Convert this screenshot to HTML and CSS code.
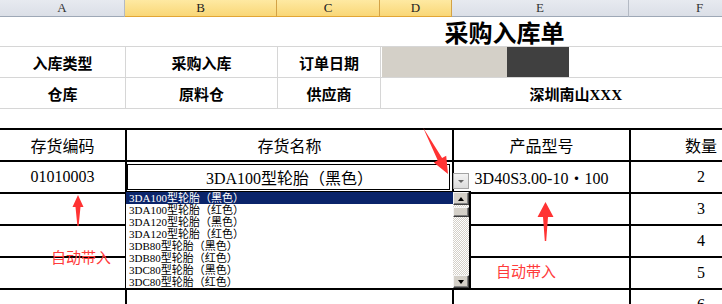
FILE: index.html
```html
<!DOCTYPE html>
<html lang="zh-CN">
<head>
<meta charset="utf-8">
<title>采购入库单</title>
<link rel="stylesheet" href="styles.css">
</head>
<body>
<div class="sheet">
  <div class="colhead">
    <div class="ch">A</div>
    <div class="ch sel">B</div>
    <div class="ch sel">C</div>
    <div class="ch sel">D</div>
    <div class="ch">E</div>
    <div class="ch">F</div>
  </div>

  <div class="row r-title">
    <div class="title">采购入库单</div>
  </div>

  <div class="row r-info">
    <div class="c lbl">入库类型</div>
    <div class="c lbl gl">采购入库</div>
    <div class="c lbl gl">订单日期</div>
    <div class="c gl date"><span class="box light"></span><span class="box dark"></span></div>
    <div class="c"></div>
  </div>

  <div class="row r-info">
    <div class="c lbl">仓库</div>
    <div class="c lbl gl">原料仓</div>
    <div class="c lbl gl">供应商</div>
    <div class="c lbl gl supplier">深圳南山XXX</div>
    <div class="c"></div>
  </div>

  <div class="row r-gap"></div>

  <div class="row t-row">
    <div class="t">存货编码</div>
    <div class="t vl wide">存货名称</div>
    <div class="t vl">产品型号</div>
    <div class="t vl">数量</div>
  </div>
  <div class="row t-row">
    <div class="t">01010003</div>
    <div class="t vl wide active">3DA100型轮胎（黑色）</div>
    <div class="t vl">3D40S3.00-10・100</div>
    <div class="t vl">2</div>
  </div>
  <div class="row t-row">
    <div class="t"></div>
    <div class="t vl wide"></div>
    <div class="t vl"></div>
    <div class="t vl">3</div>
  </div>
  <div class="row t-row">
    <div class="t"></div>
    <div class="t vl wide"></div>
    <div class="t vl"></div>
    <div class="t vl">4</div>
  </div>
  <div class="row t-row">
    <div class="t"></div>
    <div class="t vl wide"></div>
    <div class="t vl"></div>
    <div class="t vl">5</div>
  </div>
  <div class="row t-row">
    <div class="t"></div>
    <div class="t vl wide"></div>
    <div class="t vl"></div>
    <div class="t vl">6</div>
  </div>

  <div class="ddbtn"><span class="tri-down small"></span></div>

  <div class="list">
    <div class="items">
      <div class="item on">3DA100型轮胎（黑色）</div>
      <div class="item">3DA100型轮胎（红色）</div>
      <div class="item">3DA120型轮胎（黑色）</div>
      <div class="item">3DA120型轮胎（红色）</div>
      <div class="item">3DB80型轮胎（黑色）</div>
      <div class="item">3DB80型轮胎（红色）</div>
      <div class="item">3DC80型轮胎（黑色）</div>
      <div class="item">3DC80型轮胎（红色）</div>
    </div>
    <div class="sb">
      <div class="sbtn"><span class="tri-up"></span></div>
      <div class="thumb"></div>
      <div class="track"></div>
      <div class="sbtn"><span class="tri-down"></span></div>
    </div>
  </div>

  <div class="note note-a">自动带入</div>
  <div class="note note-e">自动带入</div>

  <svg class="arrows" width="722" height="304" viewBox="0 0 722 304">
    <polygon points="78,195 83.5,207 80.5,207 78.6,226 77.4,226 75.5,207 72.5,207"/>
    <polygon points="545.5,202 553.5,217 548,217 546.2,241 544.8,241 543,217 537.5,217"/>
    <polygon points="423,127.5 442.1,157.9 446.2,155.8 448,174 433.8,162.4 437.7,160.3"/>
  </svg>
</div>
</body>
</html>
```

FILE: styles.css
```css
html, body {
  margin: 0;
  padding: 0;
  background: #fff;
}

.sheet {
  --cols: 125px 152px 103px 72px 177px 142px;
  position: relative;
  width: 722px;
  height: 304px;
  overflow: hidden;
  background: #fff;
  font-family: "Liberation Serif", "Noto Sans CJK SC", serif;
  color: #000;
}

/* column header */
.colhead {
  display: grid;
  grid-template-columns: var(--cols);
  height: 17px;
}
.ch {
  box-sizing: border-box;
  height: 17px;
  background: linear-gradient(#e7eaf0, #dbdfe7);
  border-bottom: 1px solid #9ea8b6;
  border-right: 1px solid #b4bac4;
  font: 13px/16px "Liberation Serif", serif;
  color: #333;
  text-align: center;
}
.ch.sel {
  background: linear-gradient(#fee9a2, #f9d777);
  border-bottom-color: #e2a635;
  border-right-color: #d3a246;
  color: #222;
}

/* upper area */
.row {
  display: grid;
  grid-template-columns: var(--cols);
  box-sizing: border-box;
}
.r-title {
  height: 30px;
  border-bottom: 1px solid #d6d6d6;
}
.title {
  grid-column: 4 / span 2;
  text-align: center;
  font: bold 24px/29px "Noto Sans CJK SC", sans-serif;
  white-space: nowrap;
}
.r-info {
  height: 31px;
  border-bottom: 1px solid #d6d6d6;
}
.c {
  box-sizing: border-box;
  display: flex;
  align-items: center;
  justify-content: center;
  white-space: nowrap;
}
.gl {
  border-left: 1px solid #d6d6d6;
}
.lbl {
  font-weight: bold;
  font-size: 15px;
  font-family: "Liberation Serif", "Noto Sans CJK SC", serif;
}
.date {
  grid-column: 4 / span 2;
  justify-content: flex-start;
  align-items: stretch;
  padding: 0 0 0 1px;
}
.box {
  display: block;
}
.box.light {
  width: 125px;
  background: #d4d0c8;
}
.box.dark {
  width: 62px;
  background: #404040;
}
.supplier {
  grid-column: 4 / span 2;
  justify-content: flex-end;
  padding-right: 7px;
}
.r-gap {
  height: 19px;
}

/* lower table */
.t-row {
  height: 32px;
  border-top: 2px solid #000;
}
.t {
  box-sizing: border-box;
  display: flex;
  align-items: center;
  justify-content: center;
  font-size: 16px;
  white-space: nowrap;
}
.t.wide {
  grid-column: span 3;
}
.vl {
  border-left: 2px solid #000;
}
.active {
  outline: 1px solid #000;
  outline-offset: -3px;
}

/* dropdown button */
.ddbtn {
  position: absolute;
  left: 453px;
  top: 173px;
  width: 16px;
  height: 16px;
  box-sizing: border-box;
  border: 1px solid #a4a4a4;
  background: linear-gradient(#f3f3f3, #dcdcdc);
  display: flex;
  align-items: center;
  justify-content: center;
}

.tri-down,
.tri-up {
  display: block;
  width: 0;
  height: 0;
  border-left: 3.5px solid transparent;
  border-right: 3.5px solid transparent;
}
.tri-down {
  border-top: 4px solid #000;
}
.tri-up {
  border-bottom: 4px solid #000;
}
.tri-down.small {
  border-left-width: 3px;
  border-right-width: 3px;
  border-top: 3px solid #666;
  margin-top: 1px;
}

/* dropdown list */
.list {
  position: absolute;
  left: 125px;
  top: 191px;
  width: 346px;
  height: 99px;
  box-sizing: border-box;
  border: 1px solid #000;
  border-right-width: 2px;
  border-bottom-width: 2px;
  background: #fff;
  display: flex;
}
.items {
  width: 327px;
  font-size: 11px;
  line-height: 12px;
  font-family: "Liberation Serif", "Noto Sans CJK SC", serif;
}
.item {
  height: 12px;
  padding-left: 3px;
  white-space: nowrap;
  overflow: hidden;
}
.item.on {
  background: #0a246a;
  color: #fff;
}
.sb {
  width: 16px;
  display: flex;
  flex-direction: column;
  background: repeating-conic-gradient(#ffffff 0 25%, #d4d0c8 0 50%) 0 0 / 2px 2px;
}
.sbtn,
.thumb {
  box-sizing: border-box;
  background: #d4d0c8;
  border: 1px solid;
  border-color: #f4f4f4 #404040 #404040 #f4f4f4;
  box-shadow: inset -1px -1px 0 #808080;
}
.sbtn {
  height: 13px;
  display: flex;
  align-items: center;
  justify-content: center;
}
.thumb {
  height: 10px;
  margin-top: 2px;
}
.track {
  flex: 1;
}

/* annotations */
.note {
  position: absolute;
  font: 15px/16px "Noto Sans CJK SC", sans-serif;
  color: #ff3b3b;
  white-space: nowrap;
}
.note-a {
  left: 51px;
  top: 249px;
}
.note-e {
  left: 496px;
  top: 263px;
}
.arrows {
  position: absolute;
  left: 0;
  top: 0;
  pointer-events: none;
}
.arrows polygon {
  fill: #ff3333;
}
```
